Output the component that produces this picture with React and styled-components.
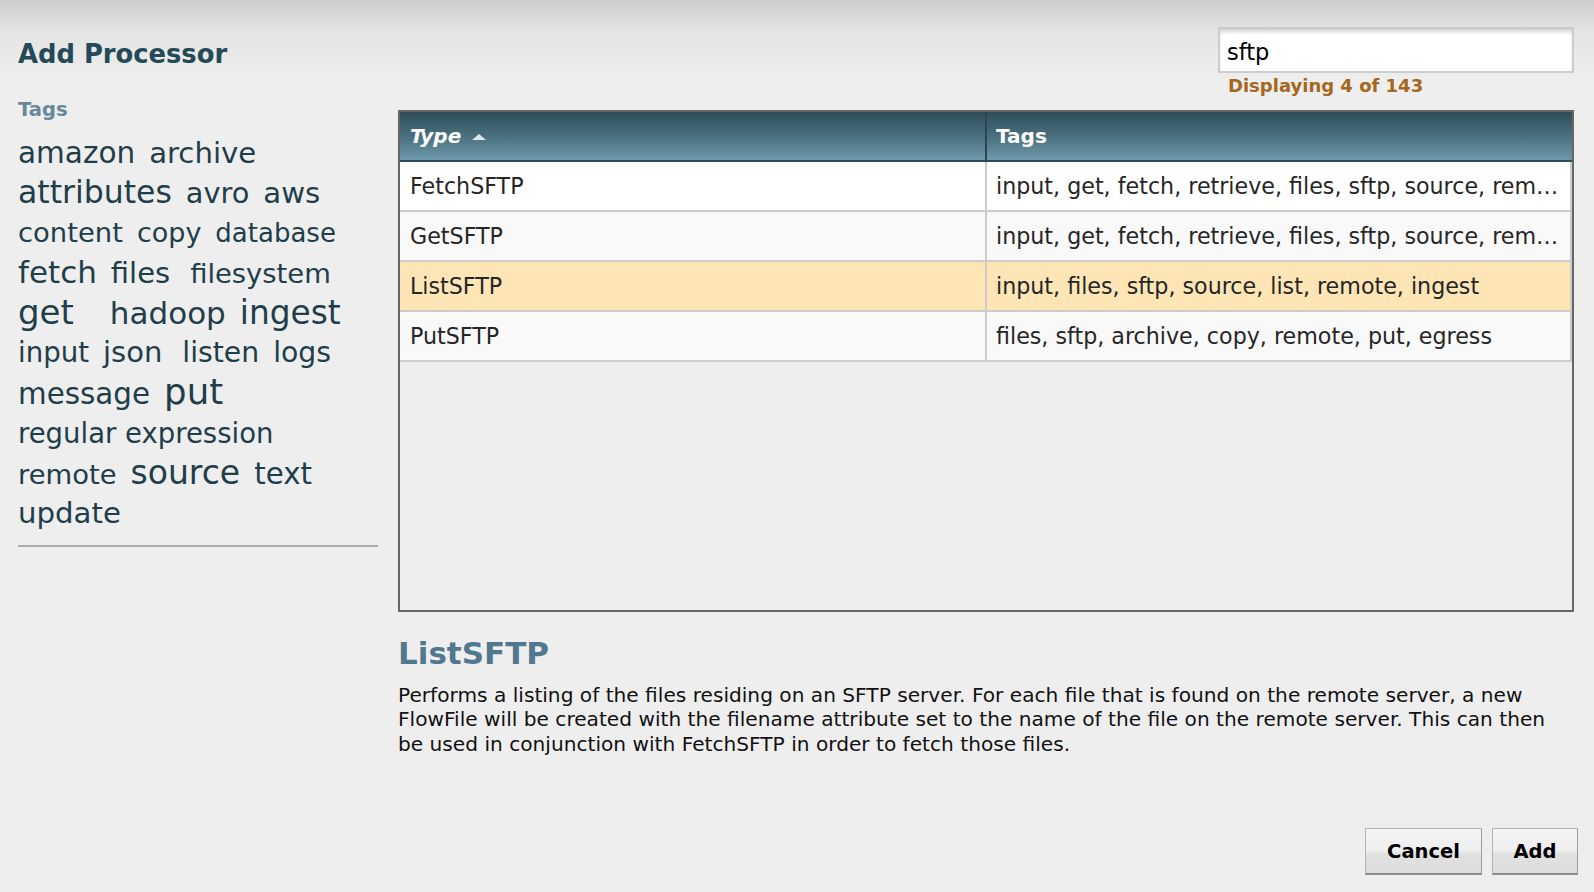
import React from 'react';
import styled, { createGlobalStyle } from 'styled-components';

const GlobalStyle = createGlobalStyle`
  html, body {
    margin: 0;
    padding: 0;
    height: 100%;
  }
  body {
    font-family: 'DejaVu Sans', Verdana, sans-serif;
    background: #eeeeee;
  }
`;

const Dialog = styled.div`
  box-sizing: border-box;
  height: 100vh;
  display: flex;
  flex-direction: column;
  background: linear-gradient(to bottom, #cdcdcd 0, #e4e4e4 30px, #eeeeee 80px) no-repeat;
  background-color: #eeeeee;
`;

const Body = styled.div`
  display: flex;
  gap: 20px;
  padding: 0 20px 0 18px;
`;

const LeftPanel = styled.div`
  width: 360px;
  flex-shrink: 0;
`;

const Title = styled.h1`
  margin: 38px 0 0;
  font-size: 25.8px;
  line-height: 32px;
  font-weight: bold;
  color: #244a57;
`;

const TagsLabel = styled.div`
  margin-top: 28px;
  font-size: 19.5px;
  line-height: 24px;
  font-weight: bold;
  color: #67889b;
`;

const TagCloud = styled.div`
  margin-top: 12px;
  display: flex;
  flex-wrap: wrap;
  align-items: baseline;
  column-gap: 14px;
  color: #1f3e4a;
`;

const Tag = styled.span`
  font-size: ${p => p.size}px;
  line-height: 39px;
  margin-right: ${p => p.extra || 0}px;
  white-space: nowrap;
  cursor: pointer;
`;

const Separator = styled.div`
  margin-top: 12px;
  height: 2px;
  background: #aaaaaa;
`;

const RightPanel = styled.div`
  flex: 1;
  min-width: 0;
  display: flex;
  flex-direction: column;
  padding-top: 27px;
`;

const SearchArea = styled.div`
  align-self: flex-end;
  width: 356px;
`;

const SearchInput = styled.input`
  box-sizing: border-box;
  width: 100%;
  height: 46px;
  border: 2px solid #cccccc;
  box-shadow: inset 0 4px 5px -2px rgba(0, 0, 0, 0.22);
  background: #ffffff;
  padding: 3px 7px 0;
  font-family: 'DejaVu Sans', Verdana, sans-serif;
  font-size: 22.5px;
  color: #000;
  outline: none;
`;

const MatchCount = styled.div`
  margin-top: 2px;
  padding-left: 10px;
  font-size: 18px;
  line-height: 22px;
  font-weight: bold;
  color: #a6661d;
`;

const Table = styled.div`
  box-sizing: border-box;
  margin-top: 13px;
  height: 502px;
  border: 2px solid #666666;
  display: flex;
  flex-direction: column;
  min-width: 0;
`;

const HeaderRow = styled.div`
  display: flex;
  height: 48px;
  background: linear-gradient(to bottom, #2f4d59 0%, #4a6f7e 50%, #6e99ac 100%);
  border-bottom: 2px solid #2d4a55;
`;

const HeaderCell = styled.div`
  box-sizing: border-box;
  display: flex;
  align-items: center;
  gap: 11px;
  padding: 0 9px;
  font-size: 20px;
  line-height: 48px;
  font-weight: bold;
  font-style: ${p => (p.sorted ? 'italic' : 'normal')};
  color: #ffffff;
  ${p => (p.width ? `width: ${p.width}px; border-right: 2px solid #2b4652; padding-left: 10px;` : 'flex: 1;')}
`;

const SortArrow = styled.span`
  width: 0;
  height: 0;
  border-left: 7px solid transparent;
  border-right: 7px solid transparent;
  border-bottom: 6px solid #dfe8ec;
  margin-top: 2px;
`;

const Row = styled.div`
  display: flex;
  height: 48px;
  min-width: 0;
  border-bottom: 2px solid #cccccc;
  background: ${p => (p.selected ? '#fde5b5' : p.odd ? '#ffffff' : '#f9f9f9')};
`;

const Cell = styled.div`
  box-sizing: border-box;
  padding: 0 10px 0 ${p => (p.width ? 10 : 9)}px;
  font-size: 22.2px;
  line-height: 48px;
  color: #262626;
  white-space: nowrap;
  overflow: hidden;
  text-overflow: ellipsis;
  border-right: 2px solid #cccccc;
  ${p => (p.width ? `width: ${p.width}px; flex-shrink: 0;` : 'flex: 1; min-width: 0;')}
`;

const DetailTitle = styled.h2`
  margin: 22px 0 0;
  font-size: 31px;
  line-height: 38px;
  font-weight: bold;
  color: #52788f;
`;

const DetailText = styled.p`
  margin: 11px 0 0;
  font-size: 20.15px;
  line-height: 24.3px;
  color: #111111;
`;

const Footer = styled.div`
  margin-top: auto;
  display: flex;
  justify-content: flex-end;
  gap: 10px;
  padding: 0 16px 17px 0;
`;

const Button = styled.button`
  box-sizing: border-box;
  width: ${p => p.width}px;
  height: 47px;
  border: 1px solid #b4b4b4;
  border-bottom: 2px solid #8c8c8c;
  border-right-color: #9c9c9c;
  background: linear-gradient(to bottom, #f4f4f4 0%, #eeeeee 50%, #e1e1e1 56%, #dddddd 100%);
  font-family: 'DejaVu Sans', Verdana, sans-serif;
  font-size: 19.5px;
  font-weight: bold;
  color: #000;
  cursor: pointer;
  padding: 0;
`;

const tags = [
  { name: 'amazon', size: 29.5 },
  { name: 'archive', size: 29.2 },
  { name: 'attributes', size: 31.5 },
  { name: 'avro', size: 28.8 },
  { name: 'aws', size: 29.2 },
  { name: 'content', size: 27.4 },
  { name: 'copy', size: 27 },
  { name: 'database', size: 26 },
  { name: 'fetch', size: 31 },
  { name: 'files', size: 29, extra: 6 },
  { name: 'filesystem', size: 27.4 },
  { name: 'get', size: 34, extra: 22 },
  { name: 'hadoop', size: 31 },
  { name: 'ingest', size: 32.8 },
  { name: 'input', size: 27.6 },
  { name: 'json', size: 29, extra: 6 },
  { name: 'listen', size: 28.3 },
  { name: 'logs', size: 28.3 },
  { name: 'message', size: 29.4 },
  { name: 'put', size: 35.5 },
  { name: 'regular expression', size: 27.5 },
  { name: 'remote', size: 27.4 },
  { name: 'source', size: 33 },
  { name: 'text', size: 29.3 },
  { name: 'update', size: 29.2 },
];

const processors = [
  { type: 'FetchSFTP', tags: 'input, get, fetch, retrieve, files, sftp, source, remote, ingest' },
  { type: 'GetSFTP', tags: 'input, get, fetch, retrieve, files, sftp, source, remote, ingest' },
  { type: 'ListSFTP', tags: 'input, files, sftp, source, list, remote, ingest', selected: true },
  { type: 'PutSFTP', tags: 'files, sftp, archive, copy, remote, put, egress' },
];

const App = () => {
  return (
    <Dialog>
      <GlobalStyle />
      <Body>
        <LeftPanel>
          <Title>Add Processor</Title>
          <TagsLabel>Tags</TagsLabel>
          <TagCloud>
            {tags.map(t => (
              <Tag key={t.name} size={t.size} extra={t.extra}>{t.name}</Tag>
            ))}
          </TagCloud>
          <Separator />
        </LeftPanel>

        <RightPanel>
          <SearchArea>
            <SearchInput defaultValue="sftp" />
            <MatchCount>Displaying 4 of 143</MatchCount>
          </SearchArea>

          <Table>
            <HeaderRow>
              <HeaderCell width={587} sorted>
                Type <SortArrow />
              </HeaderCell>
              <HeaderCell>Tags</HeaderCell>
            </HeaderRow>
            {processors.map((p, i) => (
              <Row key={p.type} odd={i === 0} selected={p.selected}>
                <Cell width={587}>{p.type}</Cell>
                <Cell>{p.tags}</Cell>
              </Row>
            ))}
          </Table>

          <DetailTitle>ListSFTP</DetailTitle>
          <DetailText>
            Performs a listing of the files residing on an SFTP server. For each file that is found on the
            remote server, a new FlowFile will be created with the filename attribute set to the name of the
            file on the remote server. This can then be used in conjunction with FetchSFTP in order to fetch
            those files.
          </DetailText>
        </RightPanel>
      </Body>

      <Footer>
        <Button width={117}>Cancel</Button>
        <Button width={86}>Add</Button>
      </Footer>
    </Dialog>
  );
};

export default App;
